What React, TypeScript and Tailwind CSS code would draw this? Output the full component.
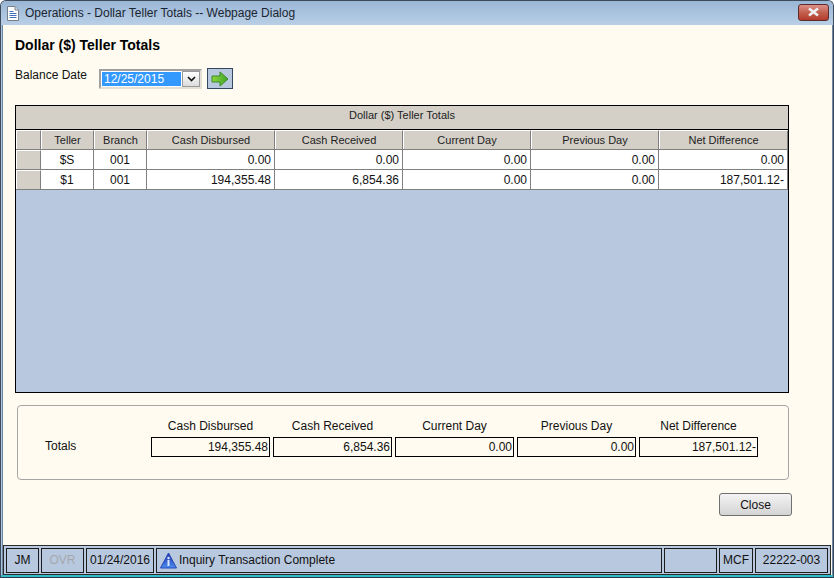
const font = { fontFamily: '"Liberation Sans", Arial, sans-serif' };

const columns = ["Teller", "Branch", "Cash Disbursed", "Cash Received", "Current Day", "Previous Day", "Net Difference"];
const rows = [
  ["$S", "001", "0.00", "0.00", "0.00", "0.00", "0.00"],
  ["$1", "001", "194,355.48", "6,854.36", "0.00", "0.00", "187,501.12-"],
];
const gridCols = "grid grid-cols-[25px_53px_53px_128px_128px_128px_128px_129px]";

const totals = [
  ["Cash Disbursed", "194,355.48"],
  ["Cash Received", "6,854.36"],
  ["Current Day", "0.00"],
  ["Previous Day", "0.00"],
  ["Net Difference", "187,501.12-"],
];

function StatusCell({ className, children }: { className: string; children?: React.ReactNode }) {
  return (
    <div className={`h-[25px] pb-[2px] border border-[#1c1c1c] flex items-center justify-center text-[12px] shrink-0 ${className}`}>
      {children}
    </div>
  );
}

export default function App() {
  return (
    <div style={font} className="w-[834px] h-[578px] overflow-hidden flex flex-col bg-[#a9c3de] text-[#111] text-[12px] relative rounded-t-[6px] border-x border-t border-[#3d4b5a]">
      {/* title bar */}
      <div className="h-[24px] shrink-0 flex items-center pl-[6px] bg-gradient-to-b from-[#9ab6d6] to-[#b9cfe6]">
        <svg width="12" height="15" viewBox="0 0 12 15" className="mr-[6px]">
          <path d="M.5 .5h7.5l3.5 3.5v10.5h-11z" fill="#fff" stroke="#76808c" />
          <path d="M8 .5v3.5h3.5" fill="#d5dfee" stroke="#76808c" />
          <path d="M2.5 5.5h4M2.5 7.5h7M2.5 9.5h7M2.5 11.5h7" stroke="#3f6fc0" />
        </svg>
        <span className="text-[12px] text-[#1b2530]">Operations - Dollar Teller Totals -- Webpage Dialog</span>
        <div className="ml-auto mr-[4px] mb-[2px] w-[31px] h-[17px] rounded-[3px] border border-[#5b2a2a] bg-gradient-to-b from-[#dc9089] via-[#c2604f] to-[#b53a2c] flex items-center justify-center">
          <svg width="13" height="10" viewBox="0 0 13 10">
            <path d="M2 1.5l9 7M11 1.5l-9 7" stroke="#eef0f2" strokeWidth="2.6" />
          </svg>
        </div>
      </div>

      {/* client */}
      <div className="flex-1 min-h-0 ml-[1px] border-x border-[#6d87a3] bg-[#fffbf0] flex flex-col pl-[12px] pr-[41px]">
        <div className="mt-[13px] text-[14px] font-bold leading-[15px] text-black">Dollar ($) Teller Totals</div>

        <div className="flex mt-[15px] h-[22px]">
          <span className="w-[84px] leading-[14px] text-[12px]">Balance Date</span>
          <div className="w-[103px] h-[20px] mt-[1px] border-2 border-t-[#a0a0a0] border-l-[#a0a0a0] border-r-[#e4e0d6] border-b-[#e4e0d6] bg-white flex">
            <div className="flex-1 bg-[#3399ff] text-white text-[12px] leading-[15px] pl-[2px] m-[1px] mr-[1px]">12/25/2015</div>
            <div className="w-[18px] border border-[#9a9a9a] bg-gradient-to-b from-white to-[#dcdcdc] flex items-center justify-center">
              <svg width="9" height="6" viewBox="0 0 9 6"><path d="M1 1l3.5 3.5L8 1" fill="none" stroke="#111" strokeWidth="1.6" /></svg>
            </div>
          </div>
          <div className="ml-[5px] w-[26px] h-[21px] border border-[#33475e] bg-[#b8c8de] flex items-center justify-center">
            <svg width="18" height="16" viewBox="0 0 18 16">
              <defs>
                <linearGradient id="go" x1="0" y1="0" x2="1" y2="0">
                  <stop offset="0" stopColor="#8fd63a" />
                  <stop offset="1" stopColor="#3fa52a" />
                </linearGradient>
              </defs>
              <path d="M1 5h8V.9L17 8l-8 7.1V11H1z" fill="url(#go)" stroke="#3a8a28" strokeWidth="1" />
            </svg>
          </div>
        </div>

        {/* grid */}
        <div className="mt-[15px] w-[774px] h-[288px] border border-black bg-[#b8c8de] shrink-0">
          <div className="h-[24px] pb-[5px] bg-[#d4d0c8] border-b border-black flex items-center justify-center text-[11px] text-[#222]">
            Dollar ($) Teller Totals
          </div>
          <div className={`${gridCols} h-[20px] bg-[#d4d0c8] border-b border-[#808080]`}>
            <div className="border-l border-t border-white border-r-[#808080] border-r" />
            {columns.map((c) => (
              <div key={c} className="pt-[1px] border-l border-t border-white border-r-[#808080] border-r flex items-center justify-center text-[11px] text-[#222]">
                {c}
              </div>
            ))}
          </div>
          {rows.map((r) => (
            <div key={r[0]} className={`${gridCols} h-[20px] border-b border-[#808080]`}>
              <div className="bg-[#d4d0c8] border-l border-t border-white border-r border-r-[#808080]" />
              {r.map((v, i) => (
                <div
                  key={i}
                  className={`pt-[1px] bg-white border-r border-[#808080] flex items-center text-[12px] ${i < 2 ? "justify-center" : "justify-end pr-[3px]"}`}
                >
                  {v}
                </div>
              ))}
            </div>
          ))}
        </div>

        {/* totals */}
        <div className="mt-[12px] ml-[2px] w-[772px] h-[75px] rounded-[4px] border border-[#a6a6a6] shrink-0 flex flex-col">
          <div className="flex pl-[133px] gap-[3px] mt-[13px] h-[16px]">
            {totals.map(([l]) => (
              <div key={l} className="w-[119px] text-center text-[12px] leading-[14px]">{l}</div>
            ))}
          </div>
          <div className="flex items-center mt-[2px] pl-[27px]">
            <span className="w-[106px] text-[12px] pb-[2px]">Totals</span>
            <div className="flex gap-[3px]">
              {totals.map(([l, v]) => (
                <div key={l} className="w-[119px] h-[20px] border border-black flex items-center justify-end pr-[1px] text-[12px]">{v}</div>
              ))}
            </div>
          </div>
        </div>

        <div className="flex justify-end mt-[13px] mr-[-1px]">
          <button className="w-[73px] h-[23px] rounded-[3px] border border-[#707070] bg-gradient-to-b from-[#f3f3f3] to-[#d4d4d4] text-[12px] text-[#111]">Close</button>
        </div>
      </div>

      {/* status bar */}
      <div className="absolute left-[2px] right-[2px] bottom-[3px] h-[30px] bg-[#b8c8de] border border-[#2c2c2c] flex items-start gap-[2px] pl-[2px] pt-[2px]">
        <StatusCell className="w-[33px]">JM</StatusCell>
        <StatusCell className="w-[43px] text-[#a4a8ae]">OVR</StatusCell>
        <StatusCell className="w-[68px]">01/24/2016</StatusCell>
        <StatusCell className="w-[506px] !justify-start pl-[3px]">
          <svg width="17" height="17" viewBox="0 0 17 17" className="mr-[2px] mt-[2px]">
            <defs>
              <linearGradient id="info" x1="0" y1="0" x2="0" y2="1">
                <stop offset="0" stopColor="#1c2fa8" />
                <stop offset="1" stopColor="#4c8df0" />
              </linearGradient>
            </defs>
            <path d="M8.5 1L16.5 16H.5z" fill="url(#info)" stroke="#2746b8" />
            <circle cx="8.5" cy="6" r="1.2" fill="#d9e6ff" />
            <path d="M8.5 8v6" stroke="#d9e6ff" strokeWidth="2" />
          </svg>
          Inquiry Transaction Complete
        </StatusCell>
        <StatusCell className="w-[53px]" />
        <StatusCell className="w-[34px]">MCF</StatusCell>
        <StatusCell className="w-[73px]">22222-003</StatusCell>
      </div>
      <div className="absolute left-0 right-0 bottom-0 h-[3px] bg-[#30bccb] border-b border-[#2c3a48]" />
    </div>
  );
}
